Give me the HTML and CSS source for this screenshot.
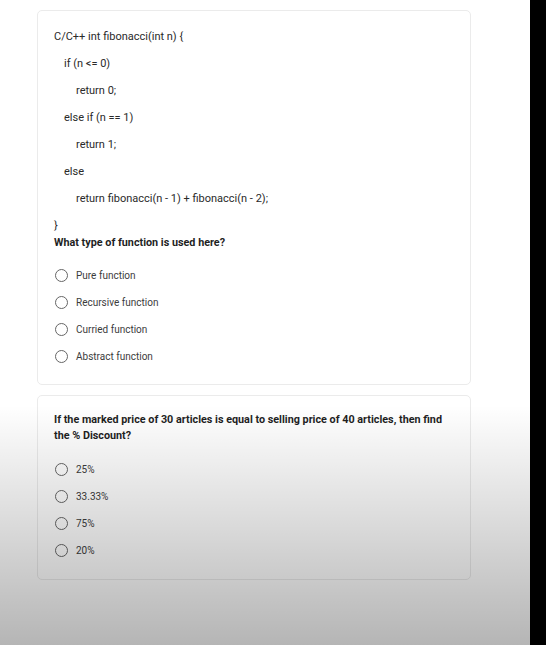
FILE: index.html
```
<!DOCTYPE html>
<html>
<head>
<meta charset="utf-8">
<link rel="stylesheet" href="styles.css">
</head>
<body>
<div class="screen">
  <main class="main">
    <section class="card card-code">
      <div class="code">
        <div class="ln">C/C++ int fibonacci(int n) {</div>
        <div class="ln i1">if (n &lt;= 0)</div>
        <div class="ln i2">return 0;</div>
        <div class="ln i1">else if (n == 1)</div>
        <div class="ln i2">return 1;</div>
        <div class="ln i1">else</div>
        <div class="ln i2">return fibonacci(n - 1) + fibonacci(n - 2);</div>
        <div class="ln">}</div>
      </div>
      <div class="q q1">What type of function is used here?</div>
      <ul class="opts opts1">
        <li class="opt"><span class="radio"></span><span class="label">Pure function</span></li>
        <li class="opt"><span class="radio"></span><span class="label">Recursive function</span></li>
        <li class="opt"><span class="radio"></span><span class="label">Curried function</span></li>
        <li class="opt"><span class="radio"></span><span class="label">Abstract function</span></li>
      </ul>
    </section>
    <section class="card card-q2">
      <div class="q q2">If the marked price of 30 articles is equal to selling price of 40 articles, then find the % Discount?</div>
      <ul class="opts opts2">
        <li class="opt"><span class="radio"></span><span class="label">25%</span></li>
        <li class="opt"><span class="radio"></span><span class="label">33.33%</span></li>
        <li class="opt"><span class="radio"></span><span class="label">75%</span></li>
        <li class="opt"><span class="radio"></span><span class="label">20%</span></li>
      </ul>
    </section>
  </main>
  <aside class="edge"></aside>
  <div class="shade"></div>
</div>
</body>
</html>
```
FILE: styles.css
```
html, body {
  margin: 0;
  padding: 0;
  background: #fff;
}
body {
  font-family: Roboto, "Liberation Sans", Arial, sans-serif;
  color: #333;
}
.screen {
  position: relative;
  width: 546px;
  height: 645px;
  display: flex;
  overflow: hidden;
}
.main {
  flex: 1;
  padding: 10px 0 0 37px;
  display: flex;
  flex-direction: column;
  gap: 10px;
}
.edge {
  width: 16px;
  background: #000;
}
.card {
  width: 434px;
  box-sizing: border-box;
  border: 1px solid #ebebeb;
  border-radius: 5px;
  background: #fff;
  padding: 0 16px;
}
.card-code {
  height: 375px;
  padding-top: 12px;
}
.card-q2 {
  height: 185px;
  padding-top: 16px;
}
.code {
  font-size: 11px;
  color: #2a2a2a;
}
.ln {
  height: 27px;
  line-height: 27px;
  white-space: pre;
}
.i1 { padding-left: 10px; }
.i2 { padding-left: 22px; }
.q {
  font-weight: 700;
  color: #1f1f1f;
  font-size: 10.8px;
}
.q1 {
  line-height: 14px;
  margin-top: -3px;
}
.q2 {
  line-height: 16px;
  padding-right: 10px;
}
.opts {
  list-style: none;
  margin: 0;
  padding: 0;
}
.opts1 { margin-top: 12px; }
.opts2 { margin-top: 12px; }
.opt {
  height: 27px;
  display: flex;
  align-items: center;
  gap: 8px;
  padding-left: 1px;
}
.radio {
  width: 13px;
  height: 13px;
  box-sizing: border-box;
  border: 1.7px solid #666;
  border-radius: 50%;
  flex: none;
}
.label {
  font-size: 10px;
  color: #3c3c3c;
}
.shade {
  position: absolute;
  left: 0;
  top: 0;
  right: 16px;
  bottom: 0;
  pointer-events: none;
  background: linear-gradient(to bottom, rgba(0,0,0,0) 0, rgba(0,0,0,0) 405px, rgba(0,0,0,0.08) 470px, rgba(0,0,0,0.29) 645px);
}
```
